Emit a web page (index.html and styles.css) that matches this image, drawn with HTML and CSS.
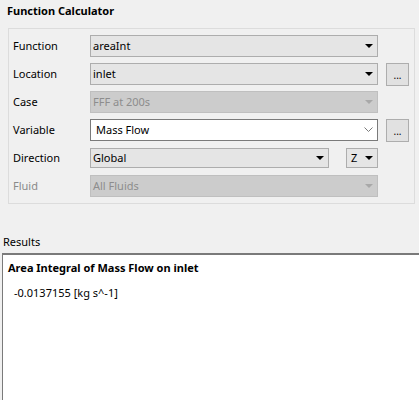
FILE: index.html
```html
<!DOCTYPE html>
<html>
<head>
<meta charset="utf-8">
<link rel="stylesheet" href="styles.css">
</head>
<body>
<div class="title">Function Calculator</div>
<div class="group">
  <div class="lbl">Function</div>
  <div class="combo"><span>areaInt</span><i class="tri"></i></div>
  <div></div>

  <div class="lbl">Location</div>
  <div class="combo"><span>inlet</span><i class="tri"></i></div>
  <div class="btn">...</div>

  <div class="lbl">Case</div>
  <div class="combo dis"><span>FFF at 200s</span><i class="tri"></i></div>
  <div></div>

  <div class="lbl">Variable</div>
  <div class="combo edit"><span>Mass Flow</span><svg class="chev" width="9" height="6" viewBox="0 0 9 6"><path d="M0.5 0.5 L4.5 4.5 L8.5 0.5" fill="none" stroke="#7a7a7a" stroke-width="1"/></svg></div>
  <div class="btn">...</div>

  <div class="lbl">Direction</div>
  <div class="dirrow">
    <div class="combo short"><span>Global</span><i class="tri"></i></div>
    <div class="combo zc short"><span>Z</span><i class="tri"></i></div>
  </div>
  <div></div>

  <div class="lbl dlbl">Fluid</div>
  <div class="combo dis"><span>All Fluids</span><i class="tri"></i></div>
  <div></div>
</div>
<div class="reslabel">Results</div>
<div class="results">
  <div class="rhead">Area Integral of Mass Flow on inlet</div>
  <div class="rval">-0.0137155 [kg s^-1]</div>
</div>
</body>
</html>
```
FILE: styles.css
```css
html, body {
  margin: 0;
  padding: 0;
  background: #f0f0f0;
  font-family: "Noto Sans", "DejaVu Sans", sans-serif;
  font-size: 11px;
  color: #000;
  height: 400px;
  overflow: hidden;
}
body {
  display: flex;
  flex-direction: column;
}
.title {
  font-weight: bold;
  font-size: 11px;
  padding: 3px 0 0 7px;
  height: 28px;
  flex: none;
  box-sizing: border-box;
  line-height: 16px;
}
.group {
  flex: none;
  margin-left: 8px;
  width: 407px;
  height: 176px;
  box-sizing: border-box;
  border: 1px solid #dcdcdc;
  padding: 6px 5px 0 4px;
  display: grid;
  grid-template-columns: 69px 288px 23px;
  column-gap: 8px;
  grid-auto-rows: 22px;
  row-gap: 6px;
  align-items: center;
}
.lbl {
  line-height: 22px;
}
.dlbl {
  color: #8a8a8a;
}
.combo {
  height: 22px;
  box-sizing: border-box;
  border: 1px solid #adadad;
  background: #e5e5e5;
  display: flex;
  align-items: center;
  justify-content: space-between;
  padding: 0 4px 0 2px;
}
.combo span {
  line-height: 18px;
}
.combo.dis {
  background: #cccccc;
  border-color: #bfbfbf;
  color: #8d8d8d;
}
.combo.edit {
  background: #fff;
  border-color: #7a7a7a;
  padding-left: 5px;
}
.tri {
  width: 0;
  height: 0;
  border-left: 4px solid transparent;
  border-right: 4px solid transparent;
  border-top: 4px solid #000;
}
.dis .tri {
  border-top-color: #a8a8a8;
}
.btn {
  height: 23px;
  box-sizing: border-box;
  border: 1px solid #adadad;
  background: #e1e1e1;
  text-align: center;
  line-height: 22px;
  font-size: 10px;
}
.dirrow {
  display: flex;
  justify-content: space-between;
  align-items: center;
}
.combo.short {
  height: 20px;
}
.dirrow .combo:first-child {
  width: 239px;
}
.combo.zc {
  width: 32px;
  padding-left: 4px;
}
.reslabel {
  flex: none;
  padding: 30px 0 0 3px;
  line-height: 16px;
  height: 49px;
  box-sizing: border-box;
}
.results {
  flex: 1;
  min-height: 0;
  margin-left: 2px;
  border-top: 2px solid #7a7a7a;
  border-left: 1px solid #7a7a7a;
  background: #fff;
}
.rhead {
  font-weight: bold;
  font-size: 11px;
  padding: 5px 0 0 5px;
  line-height: 16px;
}
.rval {
  padding: 9px 0 0 11px;
  line-height: 16px;
}
```
